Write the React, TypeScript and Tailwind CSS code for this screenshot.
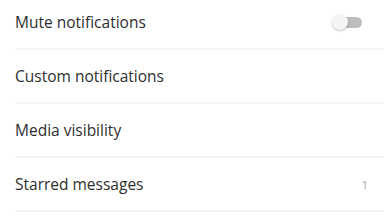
import React from "react";

function Row({ label, right }: { label: string; right?: React.ReactNode }) {
  return (
    <div className="pl-[15px]">
      <div className="flex items-center h-[54px] pt-[2px] pr-[20px] border-b-2 border-[#f4f4f4]">
        <span className="flex-1 text-[15.5px] text-[#2e2e2e]" style={{ fontFamily: '"Open Sans", sans-serif' }}>
          {label}
        </span>
        {right}
      </div>
    </div>
  );
}

export default function App() {
  return (
    <div className="w-[384px] h-[216px] bg-white overflow-hidden -mt-[4px]">
      <Row
        label="Mute notifications"
        right={
          <div className="relative w-[30px] h-[16px] mr-[2px] -mt-[2px]">
            <div className="absolute left-[8px] right-0 top-[3px] h-[11px] rounded-full bg-[#bdbdbd]" />
            <div className="absolute left-0 top-0 w-[16px] h-[16px] rounded-full bg-[#f4f4f4] shadow-[0_1px_2px_rgba(0,0,0,0.25)]" />
          </div>
        }
      />
      <Row label="Custom notifications" />
      <Row label="Media visibility" />
      <Row
        label="Starred messages"
        right={<span className="text-[11px] text-[#9e9e9e] mr-[-4px]" style={{ fontFamily: '"Open Sans", sans-serif' }}>1</span>}
      />
    </div>
  );
}
